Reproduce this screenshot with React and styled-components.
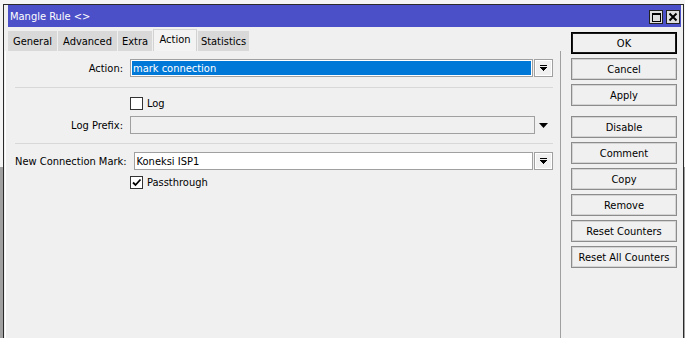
import React from 'react';
import styled, { createGlobalStyle } from 'styled-components';

const Global = createGlobalStyle`
  html, body { margin: 0; padding: 0; overflow: hidden; }
  body {
    font-family: "DejaVu Sans Condensed", "DejaVu Sans", "Liberation Sans", sans-serif;
    font-size: 11px;
    color: #000;
  }
`;

const Desktop = styled.div`
  width: 685px;
  height: 338px;
  overflow: hidden;
  box-sizing: border-box;
  padding: 4px 0 0 3px;
  background: linear-gradient(to bottom, #f4f4f4 0, #f4f4f4 167px, #a0a0a0 167px);
`;

const Window = styled.div`
  width: 681px;
  height: 350px;
  box-sizing: border-box;
  border: 1px solid #2a2a2a;
  border-bottom: none;
  background: #f0f0f0;
  display: flex;
  flex-direction: column;
`;

const TitleBar = styled.div`
  height: 22px;
  margin: 0 2px 0 4px;
  padding: 0 1px 0 2px;
  background: #4c50c8;
  color: #fff;
  display: flex;
  align-items: center;
`;

const TitleText = styled.div`
  flex: 1;
  white-space: nowrap;
`;

const TitleButtons = styled.div`
  display: flex;
  gap: 3px;
  margin-top: 1px;
`;

const TitleBtn = styled.div`
  width: 14px;
  height: 14px;
  box-sizing: border-box;
  border: 1px solid #222;
  background: #dedede;
  display: flex;
  align-items: center;
  justify-content: center;
`;

const Body = styled.div`
  flex: 1;
  display: flex;
  padding: 2px 5px 0 1px;
  gap: 10px;
`;

const LeftCol = styled.div`
  width: 556px;
  display: flex;
  flex-direction: column;
`;

const TabStrip = styled.div`
  height: 22px;
  display: flex;
  align-items: flex-end;
  gap: 1px;
  padding-left: 3px;
`;

const Tab = styled.div`
  width: ${p => p.$w}px;
  height: ${p => (p.$active ? 22 : 20)}px;
  box-sizing: border-box;
  display: flex;
  align-items: center;
  justify-content: center;
  white-space: nowrap;
  background: ${p => (p.$active ? '#f3f3f3' : '#d9d9d9')};
  border: 1px solid ${p => (p.$active ? '#d2d2d2' : '#d9d9d9')};
  border-bottom: none;
  padding-bottom: ${p => (p.$active ? 3 : 0)}px;
`;

const Pane = styled.div`
  flex: 1;
  background: #f0f0f0;
  border-left: 1px solid #fff;
  border-right: 1px solid #a0a0a0;
  padding: 8px 7px 0 9px;
  display: flex;
  flex-direction: column;
`;

const Row = styled.div`
  display: flex;
  align-items: center;
  height: 18px;
  margin-top: ${p => p.$mt || 0}px;
`;

const Label = styled.div`
  flex: 0 0 108px;
  margin-right: 7px;
  display: flex;
  justify-content: flex-end;
  white-space: nowrap;
`;

const Field = styled.div`
  width: ${p => p.$w}px;
  height: 18px;
  box-sizing: border-box;
  border: 1px solid #a0a0a0;
  padding: 1px;
  background: ${p => (p.$disabled ? '#f0f0f0' : '#fff')};
  display: flex;
`;

const FieldText = styled.div`
  flex: 1;
  display: flex;
  align-items: center;
  padding-left: 1px;
  white-space: nowrap;
  background: ${p => (p.$selected ? '#0078d7' : 'transparent')};
  color: ${p => (p.$selected ? '#fff' : '#000')};
`;

const DropBtn = styled.div`
  width: 19px;
  height: 18px;
  margin-left: 1px;
  box-sizing: border-box;
  border: 1px solid #a0a0a0;
  box-shadow: inset 0 0 0 1px #fff;
  background: #f0f0f0;
  display: flex;
  align-items: center;
  justify-content: center;
`;

const Arrow = styled.div`
  margin-left: 4px;
  display: flex;
  align-items: center;
`;

const Separator = styled.div`
  height: 1px;
  background: #d8d8d8;
  margin-top: ${p => p.$mt}px;
`;

const CheckRow = styled.div`
  display: flex;
  align-items: center;
  height: 14px;
  padding-left: 115px;
  gap: 4px;
  margin-top: ${p => p.$mt}px;
`;

const CheckBox = styled.div`
  width: 13px;
  height: 13px;
  box-sizing: border-box;
  border: 1px solid #333;
  background: #fff;
  display: flex;
  align-items: center;
  justify-content: center;
`;

const ButtonCol = styled.div`
  width: 106px;
  display: flex;
  flex-direction: column;
  gap: 4px;
  margin-top: 3px;
`;

const Button = styled.div`
  height: 22px;
  box-sizing: border-box;
  border: 1px solid ${p => (p.$default ? '#000' : '#8c8c8c')};
  box-shadow: inset 0 0 0 1px ${p => (p.$default ? '#1a1a1a' : '#d4d4d4')};
  background: #f0f0f0;
  display: flex;
  align-items: center;
  justify-content: center;
  white-space: nowrap;
  margin-bottom: ${p => p.$extra || 0}px;
`;

const DropIcon = () => (
  <svg width="7" height="6" viewBox="0 0 7 6" shapeRendering="crispEdges">
    <rect x="0" y="0" width="7" height="1" fill="#000" />
    <polygon points="0,2 7,2 3.5,6" fill="#000" />
  </svg>
);

const TriIcon = () => (
  <svg width="9" height="5" viewBox="0 0 9 5">
    <polygon points="0,0 9,0 4.5,5" fill="#000" />
  </svg>
);

const Tick = () => (
  <svg width="11" height="11" viewBox="0 0 11 11">
    <path d="M2 5.5 L4.5 8 L9.5 2.5" stroke="#000" strokeWidth="1.8" fill="none" />
  </svg>
);

const MaxIcon = () => (
  <svg width="10" height="10" viewBox="0 0 10 10" shapeRendering="crispEdges">
    <rect x="1" y="1" width="8" height="8" fill="none" stroke="#000" strokeWidth="1" />
    <rect x="1" y="1" width="8" height="2" fill="#000" />
  </svg>
);

const CloseIcon = () => (
  <svg width="10" height="10" viewBox="0 0 10 10">
    <path d="M1.5 1.5 L8.5 8.5 M8.5 1.5 L1.5 8.5" stroke="#000" strokeWidth="2" />
  </svg>
);

const tabs = [
  { name: 'General', w: 49 },
  { name: 'Advanced', w: 59 },
  { name: 'Extra', w: 34 },
  { name: 'Action', w: 44, active: true },
  { name: 'Statistics', w: 51 },
];

const buttons = [
  { label: 'OK', def: true },
  { label: 'Cancel' },
  { label: 'Apply', extra: 6 },
  { label: 'Disable' },
  { label: 'Comment' },
  { label: 'Copy' },
  { label: 'Remove' },
  { label: 'Reset Counters' },
  { label: 'Reset All Counters' },
];

export default function App() {
  return (
    <>
      <Global />
      <Desktop>
        <Window>
          <TitleBar>
            <TitleText>Mangle Rule &lt;&gt;</TitleText>
            <TitleButtons>
              <TitleBtn><MaxIcon /></TitleBtn>
              <TitleBtn><CloseIcon /></TitleBtn>
            </TitleButtons>
          </TitleBar>
          <Body>
            <LeftCol>
              <TabStrip>
                {tabs.map(t => (
                  <Tab key={t.name} $w={t.w} $active={t.active}>{t.name}</Tab>
                ))}
              </TabStrip>
              <Pane>
                <Row>
                  <Label>Action:</Label>
                  <Field $w={403}>
                    <FieldText $selected>mark connection</FieldText>
                  </Field>
                  <DropBtn><DropIcon /></DropBtn>
                </Row>
                <Separator $mt={10} />
                <CheckRow $mt={8}>
                  <CheckBox />
                  <span>Log</span>
                </CheckRow>
                <Row $mt={6}>
                  <Label>Log Prefix:</Label>
                  <Field $w={405} $disabled>
                    <FieldText />
                  </Field>
                  <Arrow><TriIcon /></Arrow>
                </Row>
                <Separator $mt={9} />
                <Row $mt={8}>
                  <Label>New Connection Mark:</Label>
                  <Field $w={403}>
                    <FieldText>Koneksi ISP1</FieldText>
                  </Field>
                  <DropBtn><DropIcon /></DropBtn>
                </Row>
                <CheckRow $mt={5}>
                  <CheckBox><Tick /></CheckBox>
                  <span>Passthrough</span>
                </CheckRow>
              </Pane>
            </LeftCol>
            <ButtonCol>
              {buttons.map(b => (
                <Button key={b.label} $default={b.def} $extra={b.extra}>{b.label}</Button>
              ))}
            </ButtonCol>
          </Body>
        </Window>
      </Desktop>
    </>
  );
}
